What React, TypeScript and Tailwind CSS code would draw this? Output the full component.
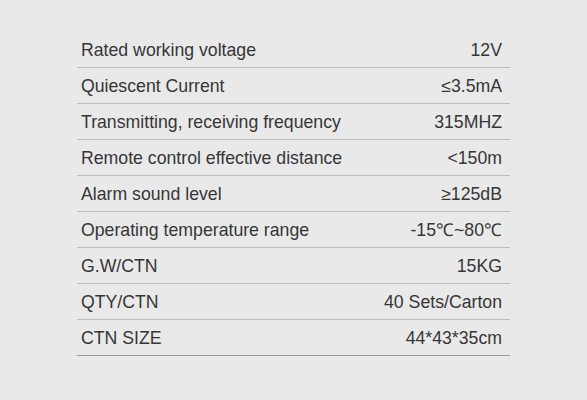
const specs = [
  { label: "Rated working voltage", value: "12V" },
  { label: "Quiescent Current", value: "≤3.5mA" },
  { label: "Transmitting, receiving frequency", value: "315MHZ" },
  { label: "Remote control effective distance", value: "<150m" },
  { label: "Alarm sound level", value: "≥125dB" },
  { label: "Operating temperature range", value: "-15℃~80℃" },
  { label: "G.W/CTN", value: "15KG" },
  { label: "QTY/CTN", value: "40 Sets/Carton" },
  { label: "CTN SIZE", value: "44*43*35cm" },
];

export default function App() {
  return (
    <div
      className="h-[400px] w-[587px] bg-[#e9e9ea] pl-[77px] pt-[32px]"
      style={{ fontFamily: '"Liberation Sans", Arial, sans-serif' }}
    >
      <div className="w-[433px]">
        {specs.map((row, i) => (
          <div
            key={row.label}
            className={`flex h-[36px] items-center justify-between border-b pl-[4px] pr-[8px] pt-[2px] text-[17.7px] text-[#363636] ${
              i === specs.length - 1 ? "border-[#9a9a9a]" : "border-[#bdbdbd]"
            }`}
          >
            <span>{row.label}</span>
            <span>{row.value}</span>
          </div>
        ))}
      </div>
    </div>
  );
}
